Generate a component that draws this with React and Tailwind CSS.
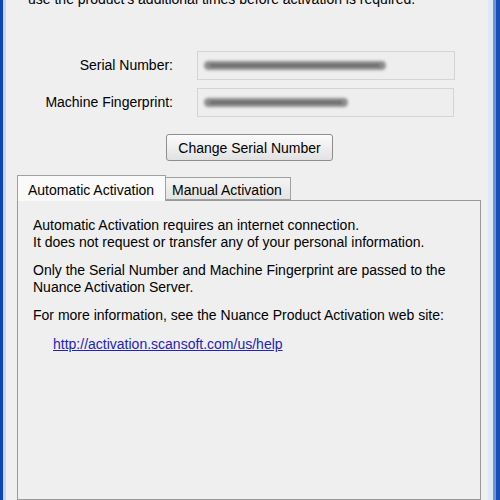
import React from "react";

function Smudge({ width }) {
    return (
        <div className="relative h-[12px]" style={{ width }}>
            <div className="absolute inset-x-0 top-[1px] h-[9px] rounded-full bg-[#8c8c8c] blur-[1.5px]"></div>
            <div className="absolute inset-x-[6px] top-[4px] h-[3px] rounded-full bg-[#6e6e6e] blur-[1px]"></div>
        </div>
    );
}

function Field({ label, smudge, inputWidth }) {
    return (
        <div className="flex items-center">
            <div className="w-[167px] text-right">{label}</div>
            <div
                className="ml-[24px] h-[29px] border border-[#d4d4d4] bg-[#eeeeee] flex items-center pl-[6px]"
                style={{ width: inputWidth }}
            >
                <Smudge width={smudge} />
            </div>
        </div>
    );
}

export default function App() {
    return (
        <div
            className="w-[500px] h-[500px] overflow-hidden flex bg-[#efefef] text-[14px] text-black"
            style={{ fontFamily: '"Liberation Sans", Arial, sans-serif' }}
        >
            <div className="w-[3px] bg-[#0d43b4]"></div>
            <div className="w-[3px] bg-[#c9d6f0]"></div>

            <div className="flex-1 flex flex-col">
                <p className="ml-[22px] mt-[-9px] leading-[17px] whitespace-nowrap">
                    use the product's additional times before activation is required.
                </p>

                <div className="mt-[43px] flex flex-col gap-[8px]">
                    <Field label="Serial Number:" smudge={182} inputWidth={258} />
                    <Field label="Machine Fingerprint:" smudge={144} inputWidth={257} />
                </div>

                <button className="mt-[17px] ml-[160px] w-[167px] h-[27px] rounded-[3px] border border-[#8e8e8e] bg-gradient-to-b from-[#fbfbfb] to-[#e2e2e2] text-[14px] leading-none">
                    Change Serial Number
                </button>

                <div className="mt-[13px] ml-[11px] flex items-end h-[26px]">
                    <div className="w-[149px] h-[26px] border border-b-0 border-[#a0a0a0] bg-[#fafafa] pl-[10px] pt-[4px] relative z-10 mb-[-1px]">
                        Automatic Activation
                    </div>
                    <div className="w-[125px] h-[23px] border border-l-0 border-[#a0a0a0] bg-gradient-to-b from-[#f4f4f4] to-[#e4e4e4] pl-[6px] pt-[2px]">
                        Manual Activation
                    </div>
                </div>

                <div className="ml-[11px] w-[464px] flex-1 border border-[#9a9a9a] bg-[#efefef] pt-[16px] pl-[15px] leading-[17px]">
                    <p>Automatic Activation requires an internet connection.</p>
                    <p>It does not request or transfer any of your personal information.</p>
                    <p className="mt-[11px]">Only the Serial Number and Machine Fingerprint are passed to the</p>
                    <p>Nuance Activation Server.</p>
                    <p className="mt-[11px]">For more information, see the Nuance Product Activation web site:</p>
                    <p className="mt-[12px] ml-[20px]">
                        <a className="text-[#2424b4] underline">http://activation.scansoft.com/us/help</a>
                    </p>
                </div>
            </div>

            <div className="w-[5px] bg-[#dfe7f5]"></div>
            <div className="w-[3px] bg-[#6f93d8]"></div>
            <div className="w-[4px] bg-[#1a4dbb]"></div>
        </div>
    );
}
